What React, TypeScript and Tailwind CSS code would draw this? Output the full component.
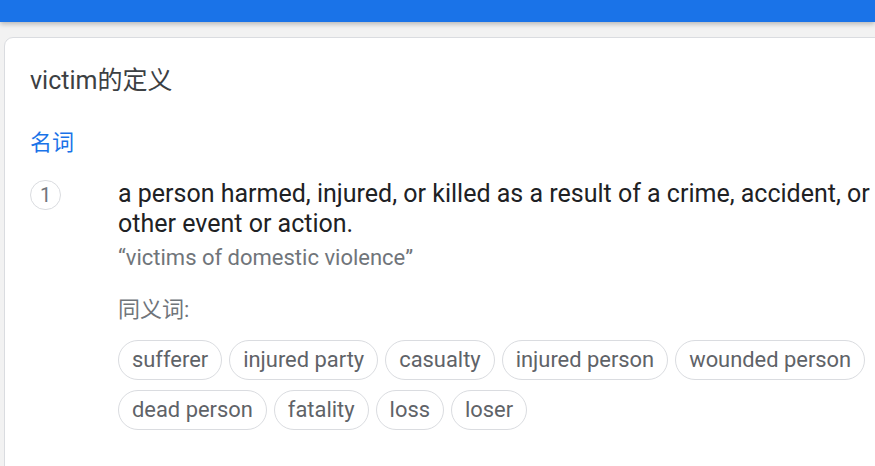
import React from "react";

const synonyms = [
  "sufferer",
  "injured party",
  "casualty",
  "injured person",
  "wounded person",
  "dead person",
  "fatality",
  "loss",
  "loser",
];

export default function App() {
  return (
    <div
      className="w-[875px] h-[466px] overflow-hidden bg-[#f2f2f2] relative"
      style={{ fontFamily: 'Roboto, "Noto Sans CJK SC", Arial, sans-serif' }}
    >
      <div className="h-[22px] bg-[#1a73e8] shadow-[0_2px_5px_rgba(0,0,0,0.25)] relative z-10" />
      <div className="pt-[15px] pl-[4px]">
        <div className="w-[900px] h-[500px] bg-white border border-[#dadce0] rounded-[9px] pt-[27px] pl-[25px]">
          <div className="text-[25px] leading-[32px] text-[#3c4043]">victim的定义</div>
          <div className="mt-[32px] text-[22px] leading-[28px] text-[#1a73e8]">名词</div>
          <div className="mt-[21px] flex">
            <div className="w-[88px] shrink-0 pt-[2px]">
              <div className="w-[31px] h-[30px] rounded-full border border-[#dadce0] flex items-center justify-center text-[20px] text-[#70757a]">
                1
              </div>
            </div>
            <div className="w-[760px]">
              <div className="text-[25px] leading-[30px] pt-[1px] text-[#202124]">
                a person harmed, injured, or killed as a result of a crime, accident, or other event or action.
              </div>
              <div className="mt-[5px] text-[22px] leading-[28px] text-[#70757a]">
                “victims of domestic violence”
              </div>
              <div className="mt-[24px] text-[22px] leading-[28px] text-[#70757a]">同义词:</div>
              <div className="mt-[16px] flex flex-wrap gap-x-[7px] gap-y-[10px]">
                {synonyms.map((s) => (
                  <div
                    key={s}
                    className="h-[40px] px-[13px] rounded-full border border-[#dadce0] flex items-center text-[21.9px] text-[#5f6368]"
                  >
                    {s}
                  </div>
                ))}
              </div>
            </div>
          </div>
        </div>
      </div>
    </div>
  );
}
